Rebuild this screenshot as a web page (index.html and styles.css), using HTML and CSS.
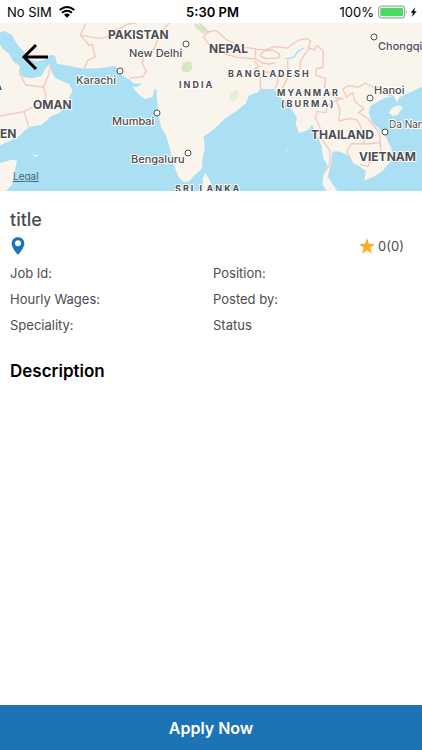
FILE: index.html
```html
<!DOCTYPE html>
<html lang="en">
<head>
  <meta charset="UTF-8">
  <meta name="viewport" content="width=device-width, initial-scale=1.0">
  <title>Job Details</title>
  <link rel="stylesheet" href="styles.css">
</head>
<body>
  <div class="status-bar">
    <div class="carrier">
      <span>No SIM</span>
      <svg width="16" height="12" viewBox="0 0 48 36" aria-hidden="true">
        <path d="M24 35 L15 26 Q24 19 33 26 Z" />
        <path d="M9 20 Q24 8 39 20" fill="none" stroke="#000" stroke-width="6" />
        <path d="M2 12 Q24 -6 46 12" fill="none" stroke="#000" stroke-width="6" />
      </svg>
    </div>
    <div class="time">5:30 PM</div>
    <div class="battery">
      <span>100%</span>
      <svg width="40" height="14" viewBox="0 0 120 42" aria-hidden="true">
        <rect x="2" y="3" width="78" height="36" rx="8" fill="#fff" stroke="#8e8e8e" stroke-width="3" />
        <rect x="7" y="8" width="68" height="26" rx="3" fill="#4cd964" />
        <path d="M84 15 q5 6 0 12 z" fill="#8e8e8e" />
        <path d="M112 7 L98 23 H105 L102 36 L116 19 H108 Z" />
      </svg>
    </div>
  </div>

  <div class="map">
    <svg class="map-canvas" viewBox="0 0 422 168" preserveAspectRatio="xMidYMid slice" role="img" aria-label="Map">
      <svg width="422" height="168" viewBox="0 69 1266 504">
        <rect y="69" width="1266" height="504" fill="#f9f5ed" />
        <!-- vegetation -->
        <g fill="#d5e8c4">
          <path d="M583 69 L612 80 L625 97 L610 102 L585 82 Z" />
          <path d="M548 188 L572 183 L578 207 L565 217 L548 216 L544 205 Z" />
          <path d="M690 278 L712 270 L718 287 L702 305 L687 296 Z" opacity=".5" />
        </g>
        <!-- sea -->
        <path fill="#abdff3" d="M0 97 L12 93 L35 104 L44 120 L54 137 L70 152 L85 176 L108 185 L134 180 L150 164 L165 167 L171 191 L205 197 L250 206 L300 204 L345 198 L359 209 L366 226 L389 239 L399 250 L426 251 L411 261 L397 260 L409 276 L434 298 L458 290 L463 267 L469 268 L471 300 L474 338 L484 383 L497 405 L510 446 L520 492 L536 532 L550 545 L567 545 L582 527 L606 506 L608 474 L614 446 L611 409 L637 392 L678 353 L710 333 L738 310 L747 286 L772 278 L782 268 L822 267 L833 276 L838 290 L858 306 L872 325 L891 353 L887 372 L897 400 L923 391 L936 375 L952 404 L966 443 L969 474 L983 496 L970 528 L967 552 L982 576 L1014 576 L996 550 L983 530 L991 500 L997 455 L1014 454 L1034 461 L1051 472 L1060 490 L1077 498 L1098 513 L1093 541 L1118 532 L1149 512 L1171 484 L1175 448 L1158 412 L1138 386 L1115 365 L1106 338 L1111 319 L1133 305 L1154 295 L1182 288 L1190 307 L1200 291 L1227 278 L1266 260 V576 H15 L35 555 L44 519 L51 480 L32 480 L0 489 V436 L27 424 L55 410 L73 393 L91 380 L126 374 L151 350 L181 337 L197 311 L218 272 L208 253 L166 234 L155 216 L149 192 L136 206 L124 229 L97 235 L70 231 L57 216 L48 191 L37 180 L28 162 L9 147 L0 133 Z" />
        <!-- islands -->
        <g fill="#f9f5ed">
          <path d="M1167 337 L1180 320 L1200 316 L1208 324 L1192 346 L1177 348 Z" />
          <path d="M616 520 L632 545 L640 576 H610 L608 535 Z" />
          <path d="M48 190 L60 198 L57 218 L47 214 Z" />
          <path d="M96 463 L116 466 L107 471 Z" />
          <path d="M858 448 L861 447 L859 464 Z" />
        </g>
        <path d="M857 176 Q887 176 890 158 L911 144" fill="none" stroke="#abdff3" stroke-width="4" />
        <!-- borders -->
        <g fill="none" stroke="#f4c7bf" stroke-width="4" stroke-linejoin="round">
          <path d="M258 69 L241 106 L267 135 L277 134 L280 151 L287 170 L263 181 L253 206" />
          <path d="M241 106 L300 115 L324 110 L328 91 L360 85 L382 72 L409 69" />
          <path d="M508 69 L488 89 L470 126 L463 147 L432 168 L427 190 L438 214 L429 230 L389 234" />
          <path d="M598 69 L626 96 L647 91 L681 120 L732 142 L766 146 L767 177 L712 172 L668 160 L623 129 L611 109 L625 97" />
          <path d="M767 148 L794 150 L824 140 L862 144 L874 135 L897 120 L922 116 L932 124 L925 142 L942 150 L952 136 L970 154 L969 201 L949 207 L948 226 L977 236 L973 262 L1004 292 L1030 296" />
          <path d="M780 167 L791 153 L818 150 L840 163 L836 174 L798 176 Z" />
          <path d="M767 177 L786 189 L810 192 L827 188 M763 183 L777 200 L763 208 L780 229 L782 275 M795 215 L824 220 L835 239 L826 266" />
          <path d="M929 142 L902 181 L898 218 L865 230 L847 265 M863 180 L865 230" />
          <path d="M1028 267 L1047 257 L1074 262 L1096 249 L1122 263 L1146 263 L1147 280 L1177 288" />
          <path d="M1028 267 L1040 291 L1058 278 L1065 304 L1092 326 L1075 338 L1102 354 L1138 398 L1143 460 L1118 465 L1104 500 L1080 493" />
          <path d="M1030 296 L1009 300 L1020 330 L1016 363 L1047 356 L1070 359 L1083 381 L1092 430" />
          <path d="M1009 300 L980 320 L979 337 L952 335 L946 354 L965 393 L962 412 L991 455 L988 496 L973 518" />
          <path d="M1143 428 L1100 432 L1054 431 L1040 454 L1056 486" />
          <path d="M58 219 L77 255 L130 261 L147 222 L151 192 M130 261 L138 288 L128 305 L72 335 L0 348 M72 335 L87 382" />
        </g>
      </svg>

      <!-- cities -->
      <g class="city-dot">
        <circle cx="186" cy="21" r="3" />
        <circle cx="120" cy="48" r="3" />
        <circle cx="157" cy="90" r="3" />
        <circle cx="188" cy="130" r="3" />
        <circle cx="374" cy="14" r="3" />
        <circle cx="370" cy="75" r="3" />
        <circle cx="385" cy="109" r="3" />
      </g>
      <g class="city">
        <text x="129" y="34">New Delhi</text>
        <text x="76" y="61">Karachi</text>
        <text x="112" y="102">Mumbai</text>
        <text x="131" y="140">Bengaluru</text>
        <text x="378" y="27">Chongqi</text>
        <text x="374" y="71">Hanoi</text>
        <text class="light" x="389" y="105">Da Nan</text>
      </g>
      <g class="country">
        <text x="108" y="16">PAKISTAN</text>
        <text x="209" y="30">NEPAL</text>
        <text x="33" y="86">OMAN</text>
        <text x="0" y="115">EN</text>
        <text x="-7" y="67">A</text>
        <text x="311" y="116">THAILAND</text>
        <text x="359" y="138">VIETNAM</text>
      </g>
      <g class="country wide">
        <text x="179" y="65">INDIA</text>
        <text x="228" y="54">BANGLADESH</text>
        <text x="277" y="73">MYANMAR</text>
        <text x="281" y="84">(BURMA)</text>
        <text x="175" y="169">SRI LANKA</text>
      </g>
    </svg>
    <button class="back" type="button" aria-label="Back">
      <svg width="28" height="28" viewBox="0 0 28 28" aria-hidden="true">
        <path d="M27 14 H3 M15 2 L3 14 L15 26" fill="none" stroke="#000" stroke-width="3" />
      </svg>
    </button>
    <a class="legal" href="#legal">Legal</a>
  </div>

  <main>
    <h1>title</h1>
    <div class="summary">
      <svg width="16" height="20" viewBox="0 0 48 60" role="img" aria-label="Location">
        <path fill="#1c73b5" fill-rule="evenodd" d="M24 4 C13 4 5 12 5 23 C5 36 24 56 24 56 C24 56 43 36 43 23 C43 12 35 4 24 4 Z M24 13 A9 9 0 1 1 24 31 A9 9 0 1 1 24 13 Z" />
      </svg>
      <div class="rating">
        <svg width="16" height="16" viewBox="0 0 48 48" aria-hidden="true">
          <path fill="#f9ae24" d="M24 0 L30 17 L48 18 L34 29 L39 47 L24 37 L9 47 L14 29 L0 18 L18 17 Z" />
        </svg>
        <span>0(0)</span>
      </div>
    </div>
    <div class="details">
      <span>Job Id:</span>
      <span>Position:</span>
      <span>Hourly Wages:</span>
      <span>Posted by:</span>
      <span>Speciality:</span>
      <span>Status</span>
    </div>
    <h2>Description</h2>
  </main>

  <button class="apply" type="button">Apply Now</button>
</body>
</html>
```
FILE: styles.css
```css
* {
  box-sizing: border-box;
}

body {
  margin: 0;
  min-height: 100vh;
  display: flex;
  flex-direction: column;
  background-color: #fff;
  color: #4d4d4d;
  font-family: Inter, "Liberation Sans", sans-serif;
  font-size: 13px;
}

button {
  border: none;
  font-family: inherit;
  cursor: pointer;
}

/* Status bar */
.status-bar {
  display: grid;
  grid-template-columns: 1fr auto 1fr;
  align-items: center;
  height: 23px;
  padding: 0 4px 0 7px;
  color: #000;
}

.carrier,
.battery {
  display: flex;
  align-items: center;
  gap: 7px;
}

.battery {
  justify-content: flex-end;
  gap: 4px;
}

.time {
  font-weight: 600;
}

/* Map */
.map {
  position: relative;
  height: 168px;
  overflow: hidden;
}

.map-canvas {
  display: block;
  width: 100%;
  height: 100%;
}

.city-dot {
  fill: #fff;
  stroke: #505050;
  stroke-width: 1px;
}

.city,
.country {
  fill: #4d4d4f;
  stroke: #fff;
  stroke-width: 2px;
  stroke-linejoin: round;
  paint-order: stroke;
}

.city {
  font-size: 11px;
  font-weight: 500;
}

.city .light {
  font-size: 10px;
  font-weight: 400;
}

.country {
  font-size: 12px;
  font-weight: 700;
}

.wide {
  font-size: 9px;
  letter-spacing: 2px;
}

.back {
  position: absolute;
  top: 20px;
  left: 21px;
  padding: 0;
  background: none;
}

.back svg {
  display: block;
}

.legal {
  position: absolute;
  left: 13px;
  bottom: 9px;
  color: #4b6470;
  font-size: 10px;
}

/* Job details */
main {
  flex: 1;
  padding: 17px 18px 16px 10px;
}

h1,
h2 {
  margin: 0;
  font-weight: 600;
  line-height: 24px;
}

h1 {
  font-size: 18px;
  font-weight: 500;
}

h2 {
  margin-top: 24px;
  color: #000;
  font-size: 17px;
}

.summary {
  display: flex;
  align-items: center;
  justify-content: space-between;
  margin-top: 4px;
}

.rating {
  display: flex;
  align-items: center;
  gap: 3px;
}

.details {
  display: grid;
  grid-template-columns: 1fr 1fr;
  gap: 6px 12px;
  margin-top: 7px;
  line-height: 20px;
}

/* Bottom button */
.apply {
  height: 45px;
  background-color: #1c73b5;
  color: #fff;
  font-size: 16px;
  font-weight: 600;
}
```
